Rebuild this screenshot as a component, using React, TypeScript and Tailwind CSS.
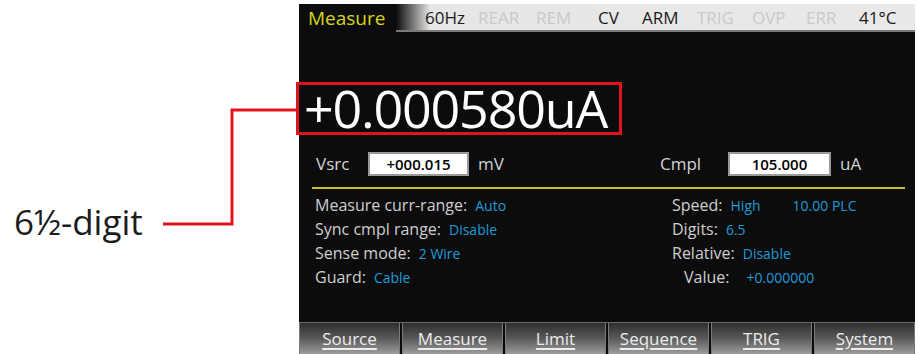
import React from "react";

const tabs = ["Source", "Measure", "Limit", "Sequence", "TRIG", "System"];

function StatusItem({ label, on }: { label: string; on: boolean }) {
  return <span className={on ? "text-[#1a1a1a]" : "text-[#c9c9c9]"}>{label}</span>;
}

function InfoRow({ label, value, extra, indent }: { label: string; value: string; extra?: string; indent?: string }) {
  return (
    <div className={`flex items-baseline h-6 ${indent ?? ""}`}>
      <span className="text-[16px] text-[#cfcfcf]">{label}</span>
      <span className="text-[14px] font-medium text-[#1f9bd6] ml-[8px]">{value}</span>
      {extra && <span className="text-[14px] font-medium text-[#1f9bd6] ml-[32px]">{extra}</span>}
    </div>
  );
}

export default function App() {
  return (
    <div className="w-[919px] h-[354px] bg-white flex overflow-hidden" style={{ fontFamily: "'Open Sans', 'Noto Sans', sans-serif" }}>
      {/* ANNOTATION */}
      <div className="relative w-[299px] shrink-0">
        <svg className="absolute left-0 top-0" width="299" height="354">
          <polyline points="163,224 232,224 232,110 298,110" fill="none" stroke="#e3121d" strokeWidth="3" />
        </svg>
        <div className="pt-[198px] pl-[14px] text-[35px] leading-[48px] text-[#1c1c1c]">6½-digit</div>
      </div>

      {/* SCREEN */}
      <div className="w-[616px] mt-[4px] bg-[#0c0c0c] flex flex-col">
        {/* status bar */}
        <div className="flex h-[29px] text-[17px] leading-none">
          <div className="w-[97px] flex items-center pl-[9px] text-[19px] text-[#d6d61c]">Measure</div>
          <div className="flex-1 flex items-center bg-[linear-gradient(to_right,#0c0c0c_0px,#e6e6e6_34px,#e9e9e9_100%)] border-b-[2px] border-[#7a7a7a] mb-[1px]">
            <div className="flex items-center pl-[29px]">
              <span className="w-[53px] text-[#1a1a1a]">60Hz</span>
              <span className="w-[58px]"><StatusItem label="REAR" on={false} /></span>
              <span className="w-[62px]"><StatusItem label="REM" on={false} /></span>
              <span className="w-[44px]"><StatusItem label="CV" on={true} /></span>
              <span className="w-[55px]"><StatusItem label="ARM" on={true} /></span>
              <span className="w-[55px]"><StatusItem label="TRIG" on={false} /></span>
              <span className="w-[54px]"><StatusItem label="OVP" on={false} /></span>
              <span className="w-[53px]"><StatusItem label="ERR" on={false} /></span>
              <span className="text-[#1a1a1a]">41°C</span>
            </div>
          </div>
        </div>

        {/* reading */}
        <div className="mt-[49px] ml-[-3px] w-[326px] h-[53px] border-[3px] border-[#e3121d] flex items-center pl-[5px]">
          <span className="text-[52px] leading-none text-white tracking-[-1.2px] mt-[-2px]">+0.000580uA</span>
        </div>

        {/* source / compliance */}
        <div className="flex items-center mt-[16px] h-[26px] text-[17px] text-[#d2d2d2]">
          <span className="ml-[17px] w-[52px]">Vsrc</span>
          <span className="w-[101px] h-[24px] bg-white border-2 border-[#9a9a9a] flex items-center justify-center text-[15px] font-semibold text-black">+000.015</span>
          <span className="ml-[9px] w-[182px]">mV</span>
          <span className="w-[68px]">Cmpl</span>
          <span className="w-[103px] h-[24px] bg-white border-2 border-[#9a9a9a] flex items-center justify-center text-[15px] font-semibold text-black">105.000</span>
          <span className="ml-[9px]">uA</span>
        </div>
        <div className="mt-[10px] ml-[13px] mr-[10px] h-[2px] bg-[#c4c42a]" />

        {/* info */}
        <div className="flex mt-[4px]">
          <div className="w-[373px] pl-[16px] flex flex-col">
            <InfoRow label="Measure curr-range:" value="Auto" />
            <InfoRow label="Sync cmpl range:" value="Disable" />
            <InfoRow label="Sense mode:" value="2 Wire" />
            <InfoRow label="Guard:" value="Cable" />
          </div>
          <div className="flex flex-col">
            <InfoRow label="Speed:" value="High" extra="10.00 PLC" />
            <InfoRow label="Digits:" value="6.5" />
            <InfoRow label="Relative:" value="Disable" />
            <InfoRow label="Value:" value="+0.000000" indent="pl-[12px] [&>span:nth-child(2)]:ml-[17px]" />
          </div>
        </div>

        {/* soft keys */}
        <div className="mt-auto flex gap-[2px] h-[32px] border-t border-[#6a6a6a]">
          {tabs.map((t) => (
            <div
              key={t}
              className="flex-1 flex items-center justify-center bg-[linear-gradient(to_bottom,#2e2e2e,#5a5a5a_50%,#9c9c9c)] border-x border-[#7a7a7a] text-[17px] text-[#ececec] underline underline-offset-[3px] decoration-[2px]"
            >
              {t}
            </div>
          ))}
        </div>
      </div>
    </div>
  );
}
